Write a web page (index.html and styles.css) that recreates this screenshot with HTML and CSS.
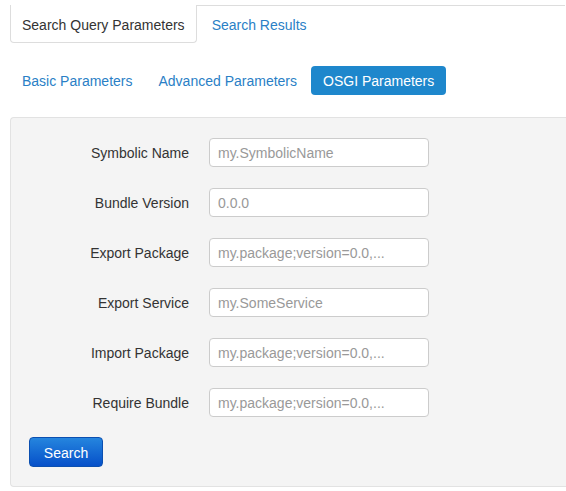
FILE: index.html
```html
<!DOCTYPE html>
<html>
<head>
<meta charset="utf-8">
<link rel="stylesheet" href="styles.css">
</head>
<body>
<div class="page">
  <ul class="tabs">
    <li class="tab active">Search Query Parameters</li>
    <li class="tab"><a href="#">Search Results</a></li>
  </ul>
  <ul class="pills">
    <li class="pill"><a href="#">Basic Parameters</a></li>
    <li class="pill"><a href="#">Advanced Parameters</a></li>
    <li class="pill active">OSGI Parameters</li>
  </ul>
  <div class="panel">
    <form class="form">
      <div class="row"><label class="label">Symbolic Name</label><input class="input" placeholder="my.SymbolicName"></div>
      <div class="row"><label class="label">Bundle Version</label><input class="input" placeholder="0.0.0"></div>
      <div class="row"><label class="label">Export Package</label><input class="input" placeholder="my.package;version=0.0,..."></div>
      <div class="row"><label class="label">Export Service</label><input class="input" placeholder="my.SomeService"></div>
      <div class="row"><label class="label">Import Package</label><input class="input" placeholder="my.package;version=0.0,..."></div>
      <div class="row"><label class="label">Require Bundle</label><input class="input" placeholder="my.package;version=0.0,..."></div>
      <div class="actions"><button type="button" class="btn">Search</button></div>
    </form>
  </div>
</div>
</body>
</html>
```
FILE: styles.css
```css
html, body {
  margin: 0;
  padding: 0;
  background: #fff;
  overflow: hidden;
}
body {
  font-family: "Liberation Sans", Arial, sans-serif;
  font-size: 14px;
  color: #333;
  width: 566px;
  height: 491px;
}
.page {
  padding: 5px 0 0 10px;
}
ul {
  list-style: none;
  margin: 0;
  padding: 0;
}
a {
  color: #2a7fc6;
  text-decoration: none;
}
.tabs {
  display: flex;
  border-top: 1px solid #dddddd;
  width: 555px;
}
.tab {
  margin-top: -1px;
  margin-right: 2px;
  padding: 10px 11px 7px 11px;
  line-height: 20px;
  border: 1px solid transparent;
  border-top: 0;
  border-radius: 0 0 4px 4px;
}
.tab.active {
  border-color: #dddddd;
  background: #fff;
  color: #333;
}
.tab a {
  padding-left: 1px;
}
.pills {
  display: flex;
  margin-top: 23px;
}
.pill {
  margin-right: 2px;
  padding: 7px 12px 5px 12px;
  line-height: 17px;
  border-radius: 4px;
}
.pill.active {
  background: #1e87cc;
  color: #fff;
}
.panel {
  margin-top: 22px;
  width: 556px;
  background: #f4f4f4;
  border: 1px solid #e2e2e2;
  border-right: 0;
  border-radius: 4px 0 0 4px;
  padding: 20px 18px 19px 18px;
  box-sizing: border-box;
}
.form {
  display: flex;
  flex-direction: column;
  gap: 21px;
}
.row {
  display: flex;
  align-items: center;
  gap: 20px;
}
.label {
  width: 160px;
  text-align: right;
  color: #333;
}
.input {
  width: 220px;
  height: 29px;
  box-sizing: border-box;
  border: 1px solid #cccccc;
  border-radius: 4px;
  background: #fff;
  padding: 0 8px;
  font-family: "Liberation Sans", Arial, sans-serif;
  font-size: 14px;
  color: #555;
  outline: none;
}
.input::placeholder {
  color: #999;
}
.actions {
  margin-top: -1px;
}
.btn {
  width: 74px;
  height: 30px;
  border: 1px solid #0b4fb0;
  border-radius: 4px;
  background: linear-gradient(#2585de, #0650c9);
  color: #fff;
  font-family: "Liberation Sans", Arial, sans-serif;
  font-size: 14px;
  padding: 1px 0 0 0;
}
```
